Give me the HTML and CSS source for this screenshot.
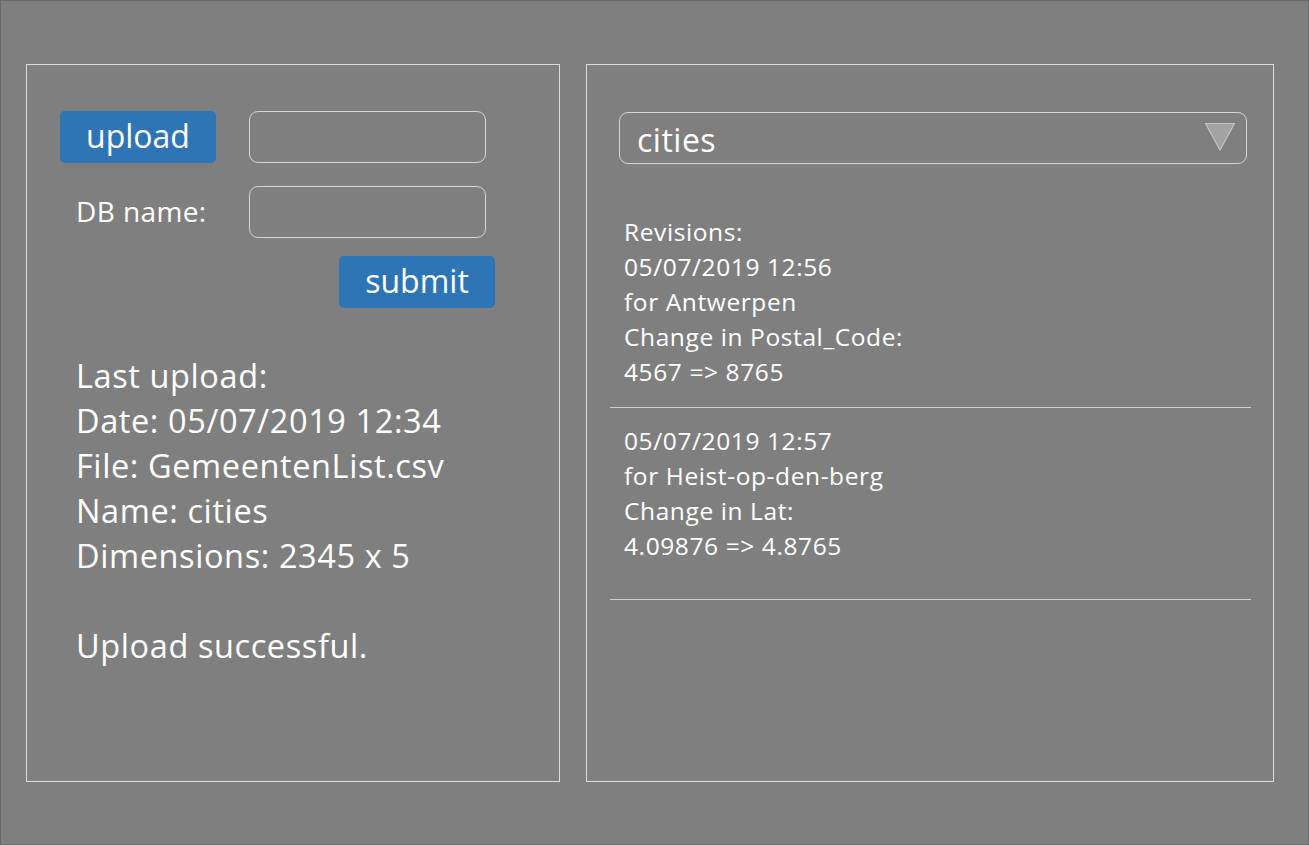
FILE: index.html
```html
<!DOCTYPE html>
<html lang="en">
<head>
<meta charset="utf-8">
<title>DB upload</title>
<link rel="stylesheet" href="styles.css">
</head>
<body>
<div class="frame">
  <section class="panel panel-left">
    <div class="form-row row-upload">
      <button class="btn">upload</button>
      <div class="field"></div>
    </div>
    <div class="form-row row-name">
      <label class="label">DB name:</label>
      <div class="field"></div>
    </div>
    <div class="submit-row">
      <button class="btn">submit</button>
    </div>
    <div class="status">
      <p>Last upload:</p>
      <p>Date: 05/07/2019 12:34</p>
      <p>File: GemeentenList.csv</p>
      <p>Name: cities</p>
      <p>Dimensions: 2345 x 5</p>
      <p class="spacer">&nbsp;</p>
      <p>Upload successful.</p>
    </div>
  </section>
  <section class="panel panel-right">
    <div class="select">
      <span class="select-value">cities</span>
      <svg class="select-arrow" width="32" height="30" viewBox="0 0 32 30">
        <polygon points="1.5,1.5 30.5,1.5 16,28" fill="#a3a3a3" stroke="#c4c4c4" stroke-width="1.2" stroke-linejoin="round"/>
      </svg>
    </div>
    <div class="revisions">
      <div class="rev rev-first">
        <p>Revisions:</p>
        <p>05/07/2019 12:56</p>
        <p>for Antwerpen</p>
        <p>Change in Postal_Code:</p>
        <p>4567 =&gt; 8765</p>
      </div>
      <div class="rev rev-second">
        <p>05/07/2019 12:57</p>
        <p>for Heist-op-den-berg</p>
        <p>Change in Lat:</p>
        <p>4.09876 =&gt; 4.8765</p>
      </div>
    </div>
  </section>
</div>
</body>
</html>
```

FILE: styles.css
```css
* { box-sizing: border-box; }
html, body { margin: 0; padding: 0; }
body {
  background: #7f7f7f;
  font-family: "Open Sans", "Noto Sans", sans-serif;
  color: #ffffff;
}
p { margin: 0; }

.frame {
  width: 1309px;
  height: 845px;
  border: 1px solid #686868;
  background: #7f7f7f;
  padding: 63px 0 0 25px;
  display: flex;
  gap: 26px;
  align-items: flex-start;
}

.panel {
  height: 718px;
  border: 1px solid #dcdcdc;
}
.panel-left { width: 534px; padding: 46px 0 0 33px; }
.panel-right { width: 688px; padding: 47px 0 0 0; }

.form-row {
  display: flex;
  align-items: center;
  gap: 33px;
  height: 52px;
}
.row-name { margin-top: 23px; }

.btn {
  width: 156px;
  height: 52px;
  border: none;
  border-radius: 5px;
  background: #2e75b6;
  color: #ffffff;
  font-family: "Open Sans", "Noto Sans", sans-serif;
  font-size: 32px;
  line-height: 1;
  padding: 0 0 2px 0;
  margin: 0;
}

.field {
  width: 237px;
  height: 52px;
  border: 1px solid #d4d4d4;
  border-radius: 9px;
}

.label {
  width: 156px;
  padding-left: 16px;
  font-size: 28px;
  letter-spacing: 0.4px;
  line-height: 1;
  padding-bottom: 2px;
}

.submit-row {
  margin-top: 18px;
  padding-left: 279px;
  height: 52px;
}

.status {
  margin-top: 45px;
  padding-left: 16px;
  font-size: 32.5px;
  letter-spacing: 0.6px;
  line-height: 45px;
}

.select {
  margin-left: 32px;
  width: 628px;
  height: 52px;
  border: 1px solid #d4d4d4;
  border-radius: 9px;
  display: flex;
  align-items: center;
  justify-content: space-between;
  padding: 0 10px 0 17px;
}
.select-value {
  font-size: 32px;
  letter-spacing: 0.5px;
  line-height: 1;
  padding-top: 3px;
}
.select-arrow { display: block; margin-top: -3px; }

.revisions {
  margin: 50px 22px 0 23px;
  font-size: 24.5px;
  letter-spacing: 0.6px;
  line-height: 35px;
}
.rev {
  padding-left: 14px;
  border-bottom: 1px solid #d0d0d0;
}
.rev-first { padding-bottom: 18px; }
.rev-second { padding-top: 15px; padding-bottom: 36px; }
```
